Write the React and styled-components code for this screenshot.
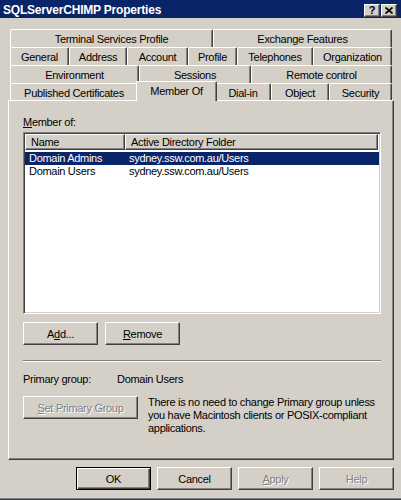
import React from 'react'
import styled, { createGlobalStyle, css } from 'styled-components'

const face = '#d4d0c8'
const shadow = '#808080'
const dark = '#404040'
const navy = '#0a246a'

const tabRows = [
  [
    { label: 'Terminal Services Profile', w: 203 },
    { label: 'Exchange Features', w: 179 },
  ],
  [
    { label: 'General', w: 59 },
    { label: 'Address', w: 58 },
    { label: 'Account', w: 61 },
    { label: 'Profile', w: 49 },
    { label: 'Telephones', w: 76 },
    { label: 'Organization', w: 79 },
  ],
  [
    { label: 'Environment', w: 129 },
    { label: 'Sessions', w: 112 },
    { label: 'Remote control', w: 141 },
  ],
  [
    { label: 'Published Certificates', w: 128 },
    { label: 'Member Of', w: 77, active: true },
    { label: 'Dial-in', w: 56 },
    { label: 'Object', w: 58 },
    { label: 'Security', w: 63 },
  ],
]

const groups = [
  { name: 'Domain Admins', folder: 'sydney.ssw.com.au/Users', selected: true },
  { name: 'Domain Users', folder: 'sydney.ssw.com.au/Users' },
]

const Global = createGlobalStyle`
  body {
    margin: 0;
    background: ${face};
    font-family: "Liberation Sans", Arial, sans-serif;
    font-size: 11px;
    letter-spacing: -0.3px;
    color: #000;
  }
`

const raised = css`
  border: 1px solid;
  border-color: #fff ${dark} ${dark} #fff;
  box-shadow: inset -1px -1px ${shadow};
`

const Window = styled.div`
  width: 401px;
  height: 500px;
  box-sizing: border-box;
  display: flex;
  flex-direction: column;
  background: ${face};
  border-bottom: 1px solid ${dark};
  box-shadow: inset 0 -1px ${shadow};
  overflow: hidden;
`

const TitleBar = styled.div`
  height: 18px;
  box-sizing: border-box;
  padding: 2px 4px 0 3px;
  background: ${navy};
  display: flex;
  align-items: center;
  justify-content: space-between;
`

const Title = styled.div`
  color: #fff;
  font-weight: bold;
  font-size: 12px;
  letter-spacing: -0.2px;
  white-space: nowrap;
`

const CaptionButtons = styled.div`
  display: flex;
  gap: 1px;
`

const CapBtn = styled.div`
  width: 16px;
  height: 13px;
  box-sizing: border-box;
  ${raised};
  background: ${face};
  display: flex;
  align-items: center;
  justify-content: center;
  font-weight: bold;
  font-size: 11px;
  letter-spacing: 0;
  line-height: 11px;
`

const Body = styled.div`
  flex: 1;
  display: flex;
  flex-direction: column;
  padding: 11px 7px 0 8px;
`

const TabStrip = styled.div`
  padding: 0 2px;
`

const TabRow = styled.div`
  display: flex;
  height: 18px;
`

const Tab = styled.div`
  width: ${p => p.$w}px;
  flex: none;
  box-sizing: border-box;
  height: 18px;
  border: 1px solid;
  border-color: #fff ${dark} transparent #fff;
  border-bottom: none;
  border-radius: 2px 2px 0 0;
  box-shadow: inset -1px 0 ${shadow};
  background: ${face};
  display: flex;
  align-items: center;
  justify-content: center;
  white-space: nowrap;
  ${p => p.$active && css`
    width: ${p.$w + 4}px;
    height: 20px;
    margin: -2px -2px 0;
    padding-bottom: 2px;
    position: relative;
    z-index: 2;
  `}
`

const Panel = styled.div`
  margin-top: -1px;
  height: 360px;
  box-sizing: border-box;
  ${raised};
  padding: 15px 12px 0 14px;
  display: flex;
  flex-direction: column;
`

const Label = styled.div`
  line-height: 13px;
  height: 13px;
`

const ListView = styled.div`
  margin-top: 3px;
  height: 182px;
  box-sizing: border-box;
  border: 1px solid;
  border-color: ${shadow} #fff #fff ${shadow};
  box-shadow: inset 1px 1px ${dark}, inset -1px -1px ${face};
  padding: 1px;
  background: #fff;
`

const ListHeader = styled.div`
  display: flex;
  height: 16px;
`

const HeaderCell = styled.div`
  width: ${p => p.$w}px;
  box-sizing: border-box;
  ${raised};
  background: ${face};
  padding-left: 5px;
  line-height: 14px;
  white-space: nowrap;
`

const ListBody = styled.div`
  padding-top: 2px;
`

const Row = styled.div`
  display: flex;
  height: 13px;
  line-height: 13px;
  white-space: nowrap;
  background: ${p => (p.$selected ? navy : 'transparent')};
  color: ${p => (p.$selected ? '#fff' : '#000')};
`

const Cell = styled.div`
  width: ${p => (p.$w ? `${p.$w}px` : 'auto')};
  padding-left: 4px;
  box-sizing: border-box;
`

const ButtonRow = styled.div`
  display: flex;
  gap: 7px;
  margin-top: 8px;
`

const Button = styled.button`
  width: ${p => p.$w || 75}px;
  height: 23px;
  box-sizing: border-box;
  padding: 0;
  font-family: inherit;
  font-size: 11px;
  letter-spacing: -0.3px;
  background: ${face};
  color: #000;
  ${raised};
  ${p => p.$default && css`
    border: 1px solid #000;
    box-shadow: inset 1px 1px #fff, inset -1px -1px ${dark}, inset -2px -2px ${shadow};
  `}
  ${p => p.disabled && css`
    color: ${shadow};
    text-shadow: 1px 1px 0 #fff;
  `}
`

const Separator = styled.div`
  margin-top: 15px;
  border-top: 1px solid ${shadow};
  border-bottom: 1px solid #fff;
`

const InfoRow = styled.div`
  display: flex;
  margin-top: 11px;
  line-height: 13px;
`

const InfoLabel = styled.div`
  width: 94px;
`

const PrimaryRow = styled.div`
  display: flex;
  gap: 10px;
  margin-top: 10px;
  align-items: flex-start;
`

const Note = styled.div`
  line-height: 13px;
  white-space: nowrap;
`

const Footer = styled.div`
  display: flex;
  justify-content: flex-end;
  gap: 6px;
  margin-top: 7px;
`

function CloseGlyph() {
  return (
    <svg width="8" height="7" viewBox="0 0 8 7">
      <path d="M0.5 0.5 L7.5 6.5 M7.5 0.5 L0.5 6.5" stroke="#000" strokeWidth="1.7" fill="none" />
    </svg>
  )
}

export default function App() {
  return (
    <>
      <Global />
      <Window>
        <TitleBar>
          <Title>SQLServerCHIMP Properties</Title>
          <CaptionButtons>
            <CapBtn>?</CapBtn>
            <CapBtn><CloseGlyph /></CapBtn>
          </CaptionButtons>
        </TitleBar>
        <Body>
          <TabStrip>
            {tabRows.map((row, i) => (
              <TabRow key={i}>
                {row.map(t => (
                  <Tab key={t.label} $w={t.w} $active={t.active}>{t.label}</Tab>
                ))}
              </TabRow>
            ))}
          </TabStrip>
          <Panel>
            <Label><u>M</u>ember of:</Label>
            <ListView>
              <ListHeader>
                <HeaderCell $w={100}>Name</HeaderCell>
                <HeaderCell $w={253}>Active Directory Folder</HeaderCell>
              </ListHeader>
              <ListBody>
                {groups.map(g => (
                  <Row key={g.name} $selected={g.selected}>
                    <Cell $w={100}>{g.name}</Cell>
                    <Cell>{g.folder}</Cell>
                  </Row>
                ))}
              </ListBody>
            </ListView>
            <ButtonRow>
              <Button>A<u>d</u>d...</Button>
              <Button><u>R</u>emove</Button>
            </ButtonRow>
            <Separator />
            <InfoRow>
              <InfoLabel>Primary group:</InfoLabel>
              <div>Domain Users</div>
            </InfoRow>
            <PrimaryRow>
              <Button $w={115} disabled><u>S</u>et Primary Group</Button>
              <Note>
                There is no need to change Primary group unless<br />
                you have Macintosh clients or POSIX-compliant<br />
                applications.
              </Note>
            </PrimaryRow>
          </Panel>
          <Footer>
            <Button $default>OK</Button>
            <Button>Cancel</Button>
            <Button disabled><u>A</u>pply</Button>
            <Button disabled>Help</Button>
          </Footer>
        </Body>
      </Window>
    </>
  )
}
